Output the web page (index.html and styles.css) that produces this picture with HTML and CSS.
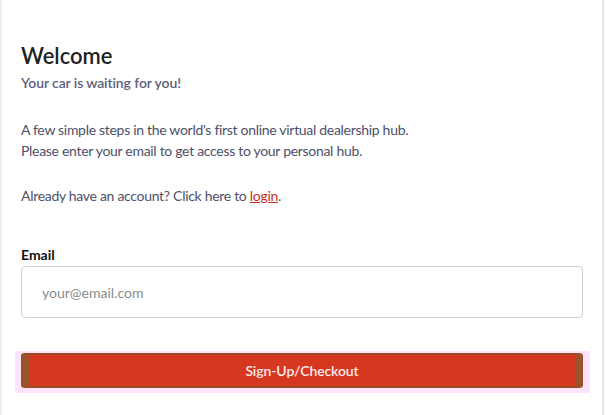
FILE: index.html
```html
<!DOCTYPE html>
<html lang="en">
<head>
    <meta charset="UTF-8">
    <meta name="viewport" content="width=device-width, initial-scale=1.0">
    <title>Welcome</title>
    <link rel="stylesheet" href="styles.css">
</head>
<body>
    <div class="panel">
        <h1 class="title">Welcome</h1>
        <p class="subtitle">Your car is waiting for you!</p>

        <p class="intro">A few simple steps in the world's first online virtual dealership hub.<br>
        Please enter your email to get access to your personal hub.</p>

        <p class="intro">Already have an account? Click here to <a href="#" class="login-link">login</a>.</p>

        <form class="signup-form">
            <label class="field-label" for="email">Email</label>
            <input type="email" id="email" class="field-input" placeholder="your@email.com">
            <div class="button-ring">
                <button type="button" class="submit-button">Sign-Up/Checkout</button>
            </div>
        </form>
    </div>
</body>
</html>
```

FILE: styles.css
```css
body {
    margin: 0;
    background: #ffffff;
    font-family: Lato, 'Liberation Sans', sans-serif;
}
.panel {
    margin: 0 2px 0 0;
    height: 415px;
    box-sizing: border-box;
    border-left: 2px solid #ececec;
    border-right: 2px solid #e4e4e4;
    padding: 42px 19px 0 19px;
}
.title {
    margin: 0;
    font-size: 22px;
    line-height: 28px;
    font-weight: 600;
    color: #1f1f24;
}
.subtitle {
    margin: 3px 0 0;
    font-size: 14px;
    line-height: 20px;
    font-weight: 600;
    letter-spacing: -0.1px;
    color: #5c5e7c;
}
.intro {
    margin: 26px 0 0;
    font-size: 14px;
    line-height: 21px;
    letter-spacing: -0.3px;
    color: #4e5068;
}
.intro + .intro {
    margin-top: 24px;
}
.login-link {
    color: #c8321f;
}
.signup-form {
    display: flex;
    flex-direction: column;
    margin-top: 39px;
}
.field-label {
    font-size: 14px;
    line-height: 20px;
    font-weight: 700;
    color: #111111;
}
.field-input {
    height: 52px;
    margin-top: 1px;
    box-sizing: border-box;
    border: 1px solid #cfcfcf;
    border-radius: 4px;
    padding: 0 20px;
    font-family: inherit;
    font-size: 14px;
}
.field-input::placeholder {
    color: #8a8a8a;
}
.button-ring {
    margin: 33px -7px 0 -6px;
    padding: 2px 7px 5px 6px;
    background: #fde3fb;
}
.submit-button {
    width: 100%;
    height: 35px;
    border: none;
    border-top: 2px solid #9c4a25;
    border-bottom: 2px solid #9c4a25;
    border-left: 8px solid #9a5228;
    border-right: 8px solid #9a5228;
    border-radius: 3px;
    background: #d6381f;
    color: #fde8ec;
    font-family: inherit;
    font-size: 14px;
    font-weight: 600;
    letter-spacing: -0.1px;
}
```
